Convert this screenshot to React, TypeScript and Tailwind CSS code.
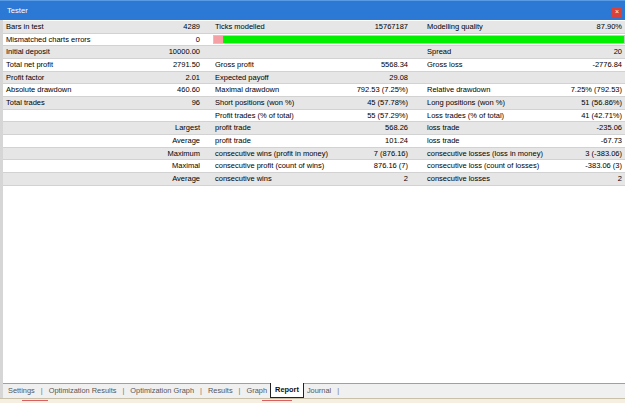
import React from 'react'

type Cell = { label?: string; value?: string }
type Row = { a: Cell; b?: Cell; c?: Cell; bar?: boolean }

const ROWS: Row[] = [
  { a: { label: 'Bars in test', value: '4289' }, b: { label: 'Ticks modelled', value: '15767187' }, c: { label: 'Modelling quality', value: '87.90%' } },
  { a: { label: 'Mismatched charts errors', value: '0' }, bar: true },
  { a: { label: 'Initial deposit', value: '10000.00' }, c: { label: 'Spread', value: '20' } },
  { a: { label: 'Total net profit', value: '2791.50' }, b: { label: 'Gross profit', value: '5568.34' }, c: { label: 'Gross loss', value: '-2776.84' } },
  { a: { label: 'Profit factor', value: '2.01' }, b: { label: 'Expected payoff', value: '29.08' } },
  { a: { label: 'Absolute drawdown', value: '460.60' }, b: { label: 'Maximal drawdown', value: '792.53 (7.25%)' }, c: { label: 'Relative drawdown', value: '7.25% (792.53)' } },
  { a: { label: 'Total trades', value: '96' }, b: { label: 'Short positions (won %)', value: '45 (57.78%)' }, c: { label: 'Long positions (won %)', value: '51 (56.86%)' } },
  { a: {}, b: { label: 'Profit trades (% of total)', value: '55 (57.29%)' }, c: { label: 'Loss trades (% of total)', value: '41 (42.71%)' } },
  { a: { value: 'Largest' }, b: { label: 'profit trade', value: '568.26' }, c: { label: 'loss trade', value: '-235.06' } },
  { a: { value: 'Average' }, b: { label: 'profit trade', value: '101.24' }, c: { label: 'loss trade', value: '-67.73' } },
  { a: { value: 'Maximum' }, b: { label: 'consecutive wins (profit in money)', value: '7 (876.16)' }, c: { label: 'consecutive losses (loss in money)', value: '3 (-383.06)' } },
  { a: { value: 'Maximal' }, b: { label: 'consecutive profit (count of wins)', value: '876.16 (7)' }, c: { label: 'consecutive loss (count of losses)', value: '-383.06 (3)' } },
  { a: { value: 'Average' }, b: { label: 'consecutive wins', value: '2' }, c: { label: 'consecutive losses', value: '2' } },
]

const TABS = ['Settings', 'Optimization Results', 'Optimization Graph', 'Results', 'Graph', 'Report', 'Journal']

function CellView({ cell, className }: { cell?: Cell; className: string }) {
  return (
    <div className={`flex items-center justify-between ${className}`}>
      <span>{cell?.label}</span>
      <span>{cell?.value}</span>
    </div>
  )
}

export default function App() {
  return (
    <div
      className="flex h-[403px] w-[625px] flex-col overflow-hidden bg-white text-[7.5px] text-black"
      style={{ fontFamily: '"Liberation Sans", Arial, sans-serif' }}
    >
      {/* title bar */}
      <div className="flex h-[20px] shrink-0 items-center border-t border-[#5a9be6] bg-[#2b78d5] pl-[7px] pr-[3px]">
        <span className="text-[7.6px] text-white">Tester</span>
        <span className="ml-auto mt-[2px] flex h-[10px] w-[10px] items-center justify-center bg-[#d9413c] text-[7px] leading-none text-white">×</span>
      </div>

      <div className="flex min-h-0 flex-1 flex-col border-l-[3px] border-[#d6d6d6] pt-[1px]">
        {ROWS.map((row, i) => (
          <div
            key={i}
            className={`grid h-[12.67px] grid-cols-[202px_213px_207px] border-b border-[#d2d2d2] leading-none ${
              i % 2 === 0 ? 'bg-[#e6e6e6]' : 'bg-white'
            }`}
          >
            <CellView cell={row.a} className="pl-[3px] pr-[5px]" />
            {row.bar ? (
              <div className="col-span-2 flex items-center pl-[8px]">
                <div className="flex h-[9px] w-full border border-[#c0d0c0]">
                  <div className="w-[9px] bg-[#f4a0a4]" />
                  <div className="flex-1 bg-[#00f000]" />
                </div>
              </div>
            ) : (
              <>
                <CellView cell={row.b} className="pl-[10px] pr-[10px]" />
                <CellView cell={row.c} className="pl-[9px] pr-[3px]" />
              </>
            )}
          </div>
        ))}
        <div className="flex-1" />

        {/* tabs */}
        <div className="flex h-[15px] shrink-0 items-stretch border-t border-[#a0a0a0] bg-[#f0f0f0] pl-[2px] text-[7.4px] text-[#555]">
          {TABS.map((t) =>
            t === 'Report' ? (
              <span key={t} className="-mt-px flex items-center border-x border-b border-[#222] bg-white px-[4px] font-bold text-[#111]">
                {t}
              </span>
            ) : (
              <span key={t} className="flex items-center px-[3px]">
                <span>{t}</span>
                {t !== 'Graph' && <span className="ml-[6px] text-[#777]">|</span>}
              </span>
            )
          )}
        </div>
      </div>

      {/* peek of the chart strip below */}
      <div className="relative h-[5px] shrink-0 border-t border-[#c8c0a8] bg-[#f4efe0]">
        <div className="absolute left-[22px] top-[1px] h-[3px] w-[26px] border-t border-[#d86060]" />
        <div className="absolute left-[262px] top-[1px] h-[3px] w-[30px] border-t border-[#d86060]" />
      </div>
    </div>
  )
}
